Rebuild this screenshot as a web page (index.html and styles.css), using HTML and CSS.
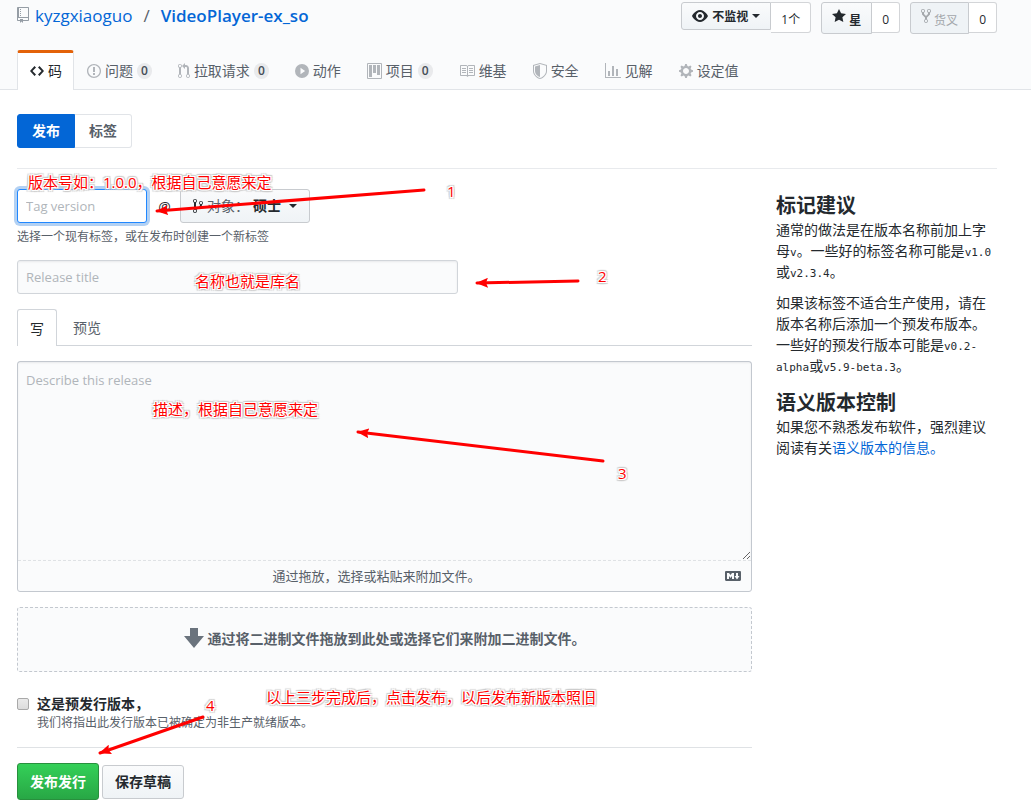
FILE: index.html
```html
<!DOCTYPE html>
<html lang="zh-CN">
<head>
<meta charset="utf-8">
<meta name="viewport" content="width=device-width, initial-scale=1">
<title>kyzgxiaoguo/VideoPlayer-ex_so</title>
<link rel="stylesheet" href="styles.css">
</head>
<body>
<header class="repo-head">
  <div class="repo-top">
    <h1 class="repo-title">
      <svg class="icon repo-icon" width="12" height="16" viewBox="0 0 12 16"><path d="M4 9H3V8h1v1zm0-3H3v1h1V6zm0-2H3v1h1V4zm0-2H3v1h1V2zm8-1v12c0 .55-.45 1-1 1H6v2l-1.500-1.500L3 16v-2H1c-.55 0-1-.45-1-1V1c0-.55.45-1 1-1h10c.55 0 1 .45 1 1zm-1 10H1v2h2v-1h3v1h5v-2zm0-10H2v9h9V1z"/></svg>
      <a href="#owner">kyzgxiaoguo</a>
      <span class="slash">/</span>
      <a class="repo-name" href="#repo">VideoPlayer-ex_so</a>
    </h1>
    <div class="actions">
      <div class="action">
        <button class="action-btn short" type="button">
          <svg class="icon" width="16" height="16" viewBox="0 0 16 16"><path d="M8.06 2C3 2 0 8 0 8s3 6 8.060 6C13 14 16 8 16 8s-3-6-7.940-6zM8 12c-2.200 0-4-1.780-4-4 0-2.200 1.800-4 4-4 2.220 0 4 1.800 4 4 0 2.220-1.780 4-4 4zm2-4c0 1.110-.89 2-2 2-1.110 0-2-.89-2-2 0-1.110.89-2 2-2 1.110 0 2 .89 2 2z"/></svg>
          不监视<span class="caret"></span>
        </button>
        <a class="count" href="#watchers">1个</a>
      </div>
      <div class="action">
        <button class="action-btn" type="button">
          <svg class="icon lift" width="14" height="16" viewBox="0 0 14 16"><path d="M14 6l-4.900-.64L7 1 4.900 5.360 0 6l3.600 3.260L2.670 14 7 11.670 11.330 14l-.93-4.740L14 6z"/></svg>
          <span class="drop">星</span>
        </button>
        <a class="count" href="#stars">0</a>
      </div>
      <div class="action">
        <button class="action-btn" type="button" disabled>
          <svg class="icon lift" width="10" height="16" viewBox="0 0 10 16"><path d="M8 1a1.993 1.993 0 00-1 3.720V6L5 8 3 6V4.720A1.993 1.993 0 002 1a1.993 1.993 0 00-1 3.720V6.500l3 3v1.780A1.993 1.993 0 005 15a1.993 1.993 0 001-3.720V9.500l3-3V4.720A1.993 1.993 0 008 1zM2 4.200C1.340 4.200.8 3.650.8 3c0-.65.55-1.200 1.200-1.200.65 0 1.200.55 1.200 1.200 0 .65-.55 1.200-1.200 1.200zm3 10c-.66 0-1.200-.55-1.200-1.200 0-.65.55-1.200 1.200-1.200.65 0 1.200.55 1.200 1.200 0 .65-.55 1.200-1.200 1.200zm3-10c-.66 0-1.200-.55-1.200-1.200 0-.65.55-1.200 1.200-1.200.65 0 1.200.55 1.200 1.200 0 .65-.55 1.200-1.200 1.200z"/></svg>
          <span class="drop">货叉</span>
        </button>
        <a class="count" href="#forks">0</a>
      </div>
    </div>
  </div>
  <nav class="repo-nav">
    <a class="tab active" href="#code"><svg class="icon" width="14" height="16" viewBox="0 0 14 16"><path d="M9.500 3L8 4.500 11.500 8 8 11.500 9.500 13 14 8 9.500 3zm-5 0L0 8l4.500 5L6 11.500 2.500 8 6 4.500 4.500 3z"/></svg>码</a>
    <a class="tab" href="#issues"><svg class="icon" width="14" height="16" viewBox="0 0 14 16"><path d="M7 2.300c3.140 0 5.700 2.560 5.700 5.700s-2.560 5.700-5.700 5.700A5.710 5.710 0 011.300 8c0-3.140 2.560-5.700 5.700-5.700zM7 1C3.140 1 0 4.140 0 8s3.140 7 7 7 7-3.140 7-7-3.140-7-7-7zm1 3H6v5h2V4zm0 6H6v2h2v-2z"/></svg>问题<span class="badge">0</span></a>
    <a class="tab" href="#pulls"><svg class="icon" width="12" height="16" viewBox="0 0 12 16"><path d="M11 11.280V5c-.03-.78-.34-1.470-.94-2.060C9.460 2.350 8.780 2.030 8 2H7V0L4 3l3 3V4h1c.27.02.48.11.69.31.21.2.3.42.31.69v6.280A1.993 1.993 0 0010 15a1.993 1.993 0 001-3.720zm-1 2.920c-.66 0-1.200-.55-1.200-1.200 0-.65.55-1.200 1.200-1.200.65 0 1.200.55 1.200 1.200 0 .65-.55 1.200-1.200 1.200zM4 3c0-1.110-.89-2-2-2a1.993 1.993 0 00-1 3.720v6.560A1.993 1.993 0 002 15a1.993 1.993 0 001-3.720V4.720c.59-.34 1-.98 1-1.720zm-.8 10c0 .66-.55 1.200-1.200 1.200-.65 0-1.200-.55-1.200-1.200 0-.65.55-1.200 1.200-1.200.65 0 1.200.55 1.200 1.200zM2 4.200C1.340 4.200.8 3.650.8 3c0-.65.55-1.200 1.200-1.200.65 0 1.200.55 1.200 1.200 0 .65-.55 1.200-1.200 1.200z"/></svg>拉取请求<span class="badge">0</span></a>
    <a class="tab" href="#actions"><svg class="icon" width="14" height="16" viewBox="0 0 14 16"><path fill-rule="evenodd" d="M14 8A7 7 0 110 8a7 7 0 0114 0zm-8.500 3.200l4.600-3.200-4.600-3.200v6.400z"/></svg>动作</a>
    <a class="tab" href="#projects"><svg class="icon" width="15" height="16" viewBox="0 0 15 16"><path fill-rule="evenodd" d="M10 12h3V2h-3v10zm-4-2h3V2H6v8zm-4 4h3V2H2v12zm-1 1h13V1H1v14zM14 0H1a1 1 0 00-1 1v14a1 1 0 001 1h13a1 1 0 001-1V1a1 1 0 00-1-1z"/></svg>项目<span class="badge">0</span></a>
    <a class="tab" href="#wiki"><svg class="icon" width="16" height="16" viewBox="0 0 16 16"><path fill-rule="evenodd" d="M3 5h4v1H3V5zm0 3h4V7H3v1zm0 2h4V9H3v1zm11-5h-4v1h4V5zm0 2h-4v1h4V7zm0 2h-4v1h4V9zm2-6v9c0 .55-.45 1-1 1H9.500l-1 1-1-1H2c-.55 0-1-.45-1-1V3c0-.55.45-1 1-1h5.500l1 1 1-1H15c.55 0 1 .45 1 1zm-8 .5L7.500 3H2v9h6V3.500zm7-.5H9.500l-.5.5V12h6V3z"/></svg>维基</a>
    <a class="tab" href="#security"><svg class="icon" width="14" height="16" viewBox="0 0 14 16"><path fill-rule="evenodd" d="M0 2l7-2 7 2v6.020C14 12.690 8.690 16 7 16c-1.690 0-7-3.310-7-7.980V2zm1 .75L7 1l6 1.750v5.268C13 12.104 8.449 15 7 15c-1.449 0-6-2.896-6-6.982V2.750zm1 .75L7 2v12c-1.207 0-5-2.482-5-5.985V3.500z"/></svg>安全</a>
    <a class="tab" href="#insights"><svg class="icon" width="16" height="16" viewBox="0 0 16 16"><path d="M16 14v1H0V0h1v14h15zM5 13H3V8h2v5zm4 0H7V3h2v10zm4 0h-2V6h2v7z"/></svg>见解</a>
    <a class="tab" href="#settings"><svg class="icon" width="14" height="16" viewBox="0 0 14 16"><path fill-rule="evenodd" d="M14 8.770v-1.600l-1.940-.64-.45-1.090.88-1.840-1.130-1.130-1.810.91-1.090-.45-.69-1.920h-1.600l-.63 1.940-1.110.45-1.840-.88-1.130 1.130.91 1.810-.45 1.090L0 7.230v1.590l1.940.64.45 1.090-.88 1.840 1.130 1.130 1.810-.91 1.090.45.69 1.920h1.590l.63-1.940 1.110-.45 1.840.88 1.130-1.130-.92-1.810.47-1.090L14 8.750v.02zM7 11c-1.660 0-3-1.340-3-3s1.340-3 3-3 3 1.340 3 3-1.340 3-3 3z"/></svg>设定值</a>
  </nav>
</header>

<main class="content">
  <nav class="subnav">
    <a class="subnav-item selected" href="#releases">发布</a>
    <a class="subnav-item" href="#tags">标签</a>
  </nav>
  <div class="columns">
    <form class="release">
      <div class="tag-row">
        <input class="field tag-field" type="text" placeholder="Tag version" aria-label="Tag version">
        <span class="at">@</span>
        <button class="btn target" type="button">
          <svg class="icon" width="10" height="16" viewBox="0 0 10 16"><path fill-rule="evenodd" d="M10 5c0-1.110-.89-2-2-2a1.993 1.993 0 00-1 3.720v.3c-.02.52-.23.98-.63 1.380-.4.4-.86.61-1.380.63-.83.02-1.480.16-2 .45V4.720a1.993 1.993 0 00-1-3.720C.88 1 0 1.890 0 3a2 2 0 001 1.720v6.560c-.59.35-1 .99-1 1.720 0 1.110.89 2 2 2 1.110 0 2-.89 2-2 0-.53-.2-1-.53-1.360.09-.06.48-.41.59-.47.25-.11.56-.17.94-.17 1.050-.05 1.950-.45 2.750-1.250S8.950 7.770 9 6.730h-.02C9.590 6.370 10 5.730 10 5zM2 1.800c.66 0 1.200.55 1.200 1.200 0 .65-.55 1.200-1.200 1.200C1.350 4.200.8 3.650.8 3c0-.65.55-1.200 1.200-1.200zm0 12.410c-.66 0-1.200-.55-1.200-1.200 0-.65.55-1.200 1.200-1.200.65 0 1.200.55 1.200 1.200 0 .65-.55 1.200-1.200 1.200zm6-8c-.66 0-1.200-.55-1.200-1.200 0-.65.55-1.200 1.200-1.200.65 0 1.200.55 1.200 1.200 0 .65-.55 1.200-1.200 1.200z"/></svg>
          <span class="target-label">对象：</span><span>硕士</span><span class="caret"></span>
        </button>
      </div>
      <p class="hint">选择一个现有标签，或在发布时创建一个新标签</p>
      <input class="field title-field" type="text" placeholder="Release title" aria-label="Release title">
      <div class="write-tabs">
        <button class="write-tab on" type="button">写</button>
        <button class="write-tab" type="button">预览</button>
      </div>
      <div class="editor">
        <textarea class="describe" placeholder="Describe this release" aria-label="Describe this release"></textarea>
        <div class="attach">
          <span>通过拖放，选择或粘贴来附加文件。</span>
          <svg class="icon" width="16" height="16" viewBox="0 0 16 16"><path fill-rule="evenodd" d="M14.850 3H1.150C.52 3 0 3.520 0 4.150v7.690C0 12.480.52 13 1.150 13h13.690c.64 0 1.150-.52 1.150-1.150v-7.700C16 3.520 15.480 3 14.850 3zM9 11H7V8L5.500 9.920 4 8v3H2V5h2l1.500 2L7 5h2v6zm2.990.5L9.500 8H11V5h2v3h1.500l-2.510 3.500z"/></svg>
        </div>
      </div>
      <div class="dropzone">
        <svg class="icon" width="20" height="20" viewBox="0 0 20 20"><path d="M6 0h8v8h6L10 20 0 8h6z"/></svg>
        通过将二进制文件拖放到此处或选择它们来附加二进制文件。
      </div>
      <div class="prerelease">
        <input class="check" type="checkbox" id="pre">
        <div>
          <label for="pre">这是预发行版本，</label>
          <p class="note">我们将指出此发行版本已被确定为非生产就绪版本。</p>
        </div>
      </div>
      <div class="submit-row">
        <button class="btn primary" type="button">发布发行</button>
        <button class="btn" type="button">保存草稿</button>
      </div>
    </form>
    <aside class="tips">
      <h2>标记建议</h2>
      <p>通常的做法是在版本名称前加上字母<code>v</code>。一些好的标签名称可能是<code>v1.0</code>或<code>v2.3.4</code>。</p>
      <p>如果该标签不适合生产使用，请在版本名称后添加一个预发布版本。一些好的预发行版本可能是<code>v0.2-alpha</code>或<code>v5.9-beta.3</code>。</p>
      <h2>语义版本控制</h2>
      <p>如果您不熟悉发布软件，强烈建议阅读有关<a href="#semver">语义版本的信息。</a></p>
    </aside>
  </div>
</main>

<div class="marks">
  <svg class="arrows" width="1031" height="808" viewBox="0 0 1031 808">
    <defs><marker id="head" viewBox="0 0 12 10" refX="11" refY="5" markerWidth="12" markerHeight="10" markerUnits="userSpaceOnUse" orient="auto"><path d="M12 5L0 0l2 5-2 5z"/></marker></defs>
    <path d="M424 190L157 211"/>
    <path d="M578 281L477 283"/>
    <path d="M603 461L358 432"/>
    <path d="M203 717L100 753"/>
  </svg>
  <span class="mark m-tag">版本号如：1.0.0，根据自己意愿来定</span>
  <span class="mark m-one">1</span>
  <span class="mark m-title">名称也就是库名</span>
  <span class="mark m-two">2</span>
  <span class="mark m-desc">描述，根据自己意愿来定</span>
  <span class="mark m-three">3</span>
  <span class="mark m-four">4</span>
  <span class="mark m-done">以上三步完成后，点击发布，以后发布新版本照旧</span>
</div>
</body>
</html>
```
FILE: styles.css
```css
* { box-sizing: border-box; }
body {
  position: relative;
  margin: 0;
  background: #fff;
  color: #24292e;
  font: 14px/21px "Open Sans", "Noto Sans CJK SC", sans-serif;
}
button, input, textarea { font: inherit; color: inherit; margin: 0; }
a { color: #0366d6; text-decoration: none; }
p, h1, h2 { margin: 0; }
.icon { fill: currentColor; flex: none; }
.caret {
  display: inline-block;
  border: 4px solid transparent;
  border-top-color: currentColor;
  border-bottom: 0;
}

/* Repository header */
.repo-head {
  padding: 2px 34px 0 17px;
  background: #fafbfc;
  border-bottom: 1px solid #e1e4e8;
}
.repo-top { display: flex; justify-content: space-between; height: 48px; }
.repo-title {
  display: flex;
  gap: 6px;
  height: 26px;
  align-items: center;
  font-size: 17px;
  font-weight: 400;
}
.repo-icon { color: #959da5; }
.slash { color: #586069; padding: 0 5px; }
.repo-name { font-weight: 600; }
.actions { display: flex; gap: 10px; align-items: flex-start; font-size: 12px; }
.action { display: flex; align-items: flex-start; }
.action-btn {
  display: flex;
  gap: 3px;
  align-items: center;
  height: 32px;
  padding: 0 10px;
  border: 1px solid #c8cbcf;
  border-radius: 3px 0 0 3px;
  background: linear-gradient(#fafbfc, #eff3f6);
  font-weight: 600;
}
.action-btn.short { height: 28px; gap: 4px; }
.action-btn:disabled { color: #a3a7ab; background: #eff3f6; font-weight: 400; }
.lift { margin-bottom: 5px; }
.drop { padding-top: 4px; }
.count {
  height: 31px;
  padding: 6px 10px 0;
  border: 1px solid #d3d5d8;
  border-left: 0;
  border-radius: 0 3px 3px 0;
  background: #fff;
  color: #24292e;
}

.repo-nav { display: flex; height: 40px; margin-bottom: -1px; }
.tab {
  display: flex;
  align-items: center;
  gap: 4px;
  padding: 0 13px 2px;
  border-top: 3px solid transparent;
  color: #586069;
  white-space: nowrap;
}
.tab .icon { color: #b1b5ba; }
.tab.active {
  padding: 0 11px 2px 12px;
  border: 1px solid #e1e4e8;
  border-top: 3px solid #e36209;
  border-bottom: 0;
  border-radius: 3px 3px 0 0;
  background: #fff;
  color: #24292e;
}
.tab.active .icon { color: #24292e; }
.badge {
  padding: 0 4px;
  border-radius: 20px;
  background: #e9eaec;
  color: #444d56;
  font-size: 12px;
  font-weight: 600;
  line-height: 16px;
}

/* Page body */
.content { padding: 24px 34px 8px 17px; }
.subnav { display: flex; font-weight: 600; line-height: 20px; }
.subnav-item {
  padding: 6px 14px;
  border: 1px solid #e1e4e8;
  border-left: 0;
  border-radius: 0 3px 3px 0;
  color: #586069;
}
.subnav-item.selected {
  border: 1px solid #0366d6;
  border-radius: 3px 0 0 3px;
  background: #0366d6;
  color: #fff;
}
.columns {
  display: grid;
  grid-template-columns: minmax(0, 1fr) 221px;
  gap: 24px;
  margin-top: 20px;
  padding-top: 20px;
  border-top: 1px solid #e8eaed;
}

/* Release form */
.field {
  height: 34px;
  padding: 0 8px;
  border: 1px solid #d1d5da;
  border-radius: 3px;
  background: #fafbfc;
  box-shadow: inset 0 1px 2px rgba(27, 31, 35, .075);
  outline: 0;
  font-size: 13px;
}
.field::placeholder, .describe::placeholder { color: #b0b5ba; opacity: 1; }
.tag-row { display: flex; align-items: center; }
.tag-field {
  width: 130px;
  border-color: #2188ff;
  background: #fff;
  box-shadow: 0 0 0 3px rgba(3, 102, 214, .3);
}
.at { width: 33px; padding-left: 2px; text-align: center; }
.btn {
  height: 34px;
  padding: 0 12px;
  border: 1px solid #c8cbcf;
  border-radius: 3px;
  background: linear-gradient(#fafbfc, #eff3f6);
  font-weight: 600;
  line-height: 20px;
}
.target { display: flex; align-items: center; gap: 4px; width: 130px; }
.target-label { color: #586069; font-weight: 400; }
.target .caret { margin-left: 4px; }
.hint { margin-top: 3px; color: #586069; font-size: 12px; }
.title-field { display: block; width: 60%; margin-top: 13px; }
.write-tabs {
  display: flex;
  height: 37px;
  margin-top: 15px;
  border-bottom: 1px solid #d1d5da;
}
.write-tab {
  height: 37px;
  padding: 0 16px;
  border: 0;
  background: none;
  color: #586069;
}
.write-tab.on {
  padding: 0 12px;
  border: 1px solid #d1d5da;
  border-bottom: 0;
  border-radius: 3px 3px 0 0;
  background: #fff;
  color: #24292e;
}
.editor {
  margin-top: 15px;
  border: 1px solid #c3c8cf;
  border-radius: 3px;
  background: #fafbfc;
}
.describe {
  display: block;
  width: 100%;
  height: 199px;
  padding: 8px;
  border: 0;
  border-bottom: 1px dashed #dfe2e5;
  background: transparent;
  box-shadow: inset 0 1px 2px rgba(27, 31, 35, .075);
  outline: 0;
  resize: vertical;
  font-size: 13px;
}
.attach {
  display: flex;
  align-items: center;
  height: 30px;
  padding: 0 10px;
  color: #586069;
  font-size: 13px;
}
.attach span { flex: 1; text-align: center; }
.dropzone {
  display: flex;
  align-items: center;
  justify-content: center;
  gap: 4px;
  height: 65px;
  margin-top: 15px;
  padding-bottom: 3px;
  border: 1px dashed #c3c8cf;
  border-radius: 3px;
  background: #fafbfc;
  color: #586069;
  font-weight: 600;
}
.dropzone .icon { color: #6a737d; }
.prerelease {
  display: flex;
  gap: 8px;
  margin-top: 21px;
  padding-bottom: 15px;
  border-bottom: 1px solid #dfe2e5;
}
.prerelease label { display: block; font-weight: 600; }
.note { color: #586069; font-size: 12px; line-height: 18px; }
.check {
  appearance: none;
  width: 12px;
  height: 12px;
  margin-top: 5px;
  border: 1px solid #a9a9a9;
  border-radius: 2px;
  background: linear-gradient(#eaeaea, #dcdcdc);
}
.submit-row { display: flex; align-items: center; gap: 3px; margin-top: 15px; }
.primary {
  height: 37px;
  border-color: #28903d;
  background: linear-gradient(#34d058, #28a745);
  color: #fff;
}

/* Advice column */
.tips h2 { padding-top: 3px; font-size: 20px; line-height: 27px; font-weight: 600; }
.tips p { margin-bottom: 10px; }
.tips code { font: 11px/16px "DejaVu Sans Mono", monospace; }

/* Red callouts over the page */
.marks { position: absolute; top: 0; left: 0; pointer-events: none; }
.arrows { display: block; fill: red; }
.arrows > path { fill: none; stroke: red; stroke-width: 3; stroke-linecap: round; marker-end: url(#head); }
.mark {
  position: absolute;
  color: red;
  font-size: 15px;
  line-height: 20px;
  white-space: nowrap;
  text-shadow:
    1px 0 #fff, -1px 0 #fff, 0 1px #fff, 0 -1px #fff,
    1px 1px #fff, -1px -1px #fff, 1px -1px #fff, -1px 1px #fff,
    2px 0 1px #ccc, -2px 0 1px #ccc, 0 2px 1px #ccc, 0 -2px 1px #ccc,
    2px 2px 1px #ccc, -2px -2px 1px #ccc, 2px -2px 1px #ccc, -2px 2px 1px #ccc;
}
.m-tag { left: 28px; top: 172px; }
.m-one { left: 447px; top: 181px; }
.m-title { left: 195px; top: 271px; }
.m-two { left: 598px; top: 266px; }
.m-desc { left: 153px; top: 399px; }
.m-three { left: 618px; top: 463px; }
.m-four { left: 206px; top: 695px; }
.m-done { left: 266px; top: 687px; }
```
